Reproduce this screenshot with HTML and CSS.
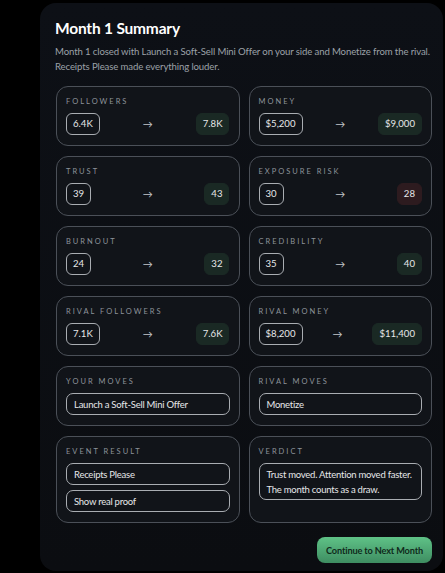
FILE: index.html
```html
<!DOCTYPE html>
<html lang="en">
<head>
  <meta charset="UTF-8">
  <meta name="viewport" content="width=device-width, initial-scale=1.0">
  <title>Month 1 Summary</title>
  <link rel="stylesheet" href="styles.css">
</head>
<body>

  <div class="summary-panel">
    <h1>Month 1 Summary</h1>
    <p class="intro">Month 1 closed with Launch a Soft-Sell Mini Offer on your side and Monetize from the rival. Receipts Please made everything louder.</p>

    <div class="card-grid">
      <!-- Stat cards -->
      <div class="card">
        <div class="card-label">Followers</div>
        <div class="stat-row">
          <span class="pill">6.4K</span>
          <span class="arrow">→</span>
          <span class="pill pill-up">7.8K</span>
        </div>
      </div>
      <div class="card">
        <div class="card-label">Money</div>
        <div class="stat-row">
          <span class="pill">$5,200</span>
          <span class="arrow">→</span>
          <span class="pill pill-up">$9,000</span>
        </div>
      </div>

      <div class="card">
        <div class="card-label">Trust</div>
        <div class="stat-row">
          <span class="pill">39</span>
          <span class="arrow">→</span>
          <span class="pill pill-up">43</span>
        </div>
      </div>
      <div class="card">
        <div class="card-label">Exposure Risk</div>
        <div class="stat-row">
          <span class="pill">30</span>
          <span class="arrow">→</span>
          <span class="pill pill-down">28</span>
        </div>
      </div>

      <div class="card">
        <div class="card-label">Burnout</div>
        <div class="stat-row">
          <span class="pill">24</span>
          <span class="arrow">→</span>
          <span class="pill pill-up">32</span>
        </div>
      </div>
      <div class="card">
        <div class="card-label">Credibility</div>
        <div class="stat-row">
          <span class="pill">35</span>
          <span class="arrow">→</span>
          <span class="pill pill-up">40</span>
        </div>
      </div>

      <div class="card">
        <div class="card-label">Rival Followers</div>
        <div class="stat-row">
          <span class="pill">7.1K</span>
          <span class="arrow">→</span>
          <span class="pill pill-up">7.6K</span>
        </div>
      </div>
      <div class="card">
        <div class="card-label">Rival Money</div>
        <div class="stat-row">
          <span class="pill">$8,200</span>
          <span class="arrow">→</span>
          <span class="pill pill-up">$11,400</span>
        </div>
      </div>

      <!-- Moves -->
      <div class="card">
        <div class="card-label">Your Moves</div>
        <div class="text-box">Launch a Soft-Sell Mini Offer</div>
      </div>
      <div class="card">
        <div class="card-label">Rival Moves</div>
        <div class="text-box">Monetize</div>
      </div>

      <!-- Result -->
      <div class="card">
        <div class="card-label">Event Result</div>
        <div class="text-box">Receipts Please</div>
        <div class="text-box">Show real proof</div>
      </div>
      <div class="card">
        <div class="card-label">Verdict</div>
        <div class="text-box">Trust moved. Attention moved faster. The month counts as a draw.</div>
      </div>
    </div>

    <div class="actions">
      <button class="next-button">Continue to Next Month</button>
    </div>
  </div>

</body>
</html>
```

FILE: styles.css
```css
* {
  margin: 0;
  padding: 0;
  box-sizing: border-box;
}

body {
  background: #000;
  font-family: 'Lato', 'Noto Sans', sans-serif;
  color: #e8e9eb;
  overflow: hidden;
}

.summary-panel {
  margin: 3px 0 0 40px;
  width: 403px;
  height: 568px;
  background: linear-gradient(180deg, #0d1016, #0b0d11);
  border-radius: 16px;
  padding: 16px 11px 0 15px;
}

h1 {
  font-size: 15.5px;
  font-weight: 700;
  color: #fff;
  line-height: 18px;
  letter-spacing: -0.2px;
}

.intro {
  margin-top: 7px;
  font-size: 9.6px;
  line-height: 15px;
  letter-spacing: -0.12px;
  color: #9ca1a8;
}

.card-grid {
  margin-top: 12px;
  margin-left: 1px;
  display: grid;
  grid-template-columns: 1fr 1fr;
  column-gap: 9px;
  row-gap: 10px;
}

.card {
  background: #111419;
  border: 1px solid #4b5058;
  border-radius: 12px;
  padding: 10px 9px 10px 9px;
  display: flex;
  flex-direction: column;
  gap: 5px;
}

.card-label {
  font-size: 7.5px;
  line-height: 10px;
  letter-spacing: 2px;
  text-transform: uppercase;
  color: #8d939a;
  margin-bottom: 1px;
}

/* Stat rows */
.stat-row {
  display: flex;
  align-items: center;
  justify-content: space-between;
}

.pill {
  font-size: 9.6px;
  line-height: 20px;
  padding: 0 6px;
  border: 1px solid #a9adb2;
  border-radius: 6px;
  color: #e6e7e9;
  min-width: 22px;
  text-align: center;
}

.pill-up {
  background: #1a2924;
  border-color: #1a2924;
}

.pill-down {
  background: #2d1b1f;
  border-color: #2d1b1f;
}

.arrow {
  font-size: 10px;
  color: #c4c7cb;
}

/* Text boxes */
.text-box {
  font-size: 9.5px;
  line-height: 15px;
  letter-spacing: -0.25px;
  padding: 2.5px 6px 2.5px 7px;
  border: 1px solid #a9adb2;
  border-radius: 7px;
  color: #e6e7e9;
}

.actions {
  display: flex;
  justify-content: flex-end;
  margin-top: 14px;
}

.next-button {
  font-family: inherit;
  font-size: 9.2px;
  font-weight: 700;
  letter-spacing: -0.15px;
  color: #0f2a1b;
  background: linear-gradient(180deg, #5fc287, #3e8d61);
  border: none;
  border-radius: 8px;
  padding: 0 9px;
  height: 26px;
  cursor: pointer;
}
```
